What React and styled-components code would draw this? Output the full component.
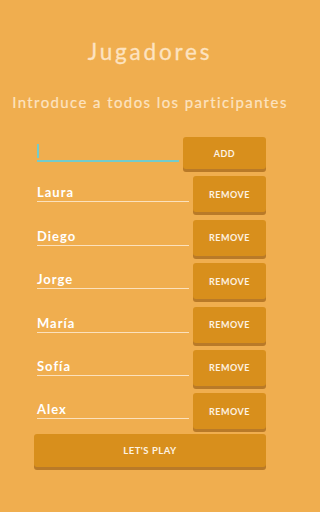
import React from "react";
import styled, { createGlobalStyle } from "styled-components";

const GlobalStyle = createGlobalStyle`
  html, body {
    margin: 0;
    padding: 0;
    background: #f0ae4f;
  }
  body {
    font-family: "Lato", "Noto Sans", sans-serif;
  }
`;

const Page = styled.div`
  width: 300px;
  height: 512px;
  overflow: hidden;
  padding-top: 39px;
  box-sizing: border-box;
  background: #f0ae4f;
`;

const Title = styled.h1`
  margin: 0;
  font-size: 22.5px;
  line-height: 26px;
  font-weight: 400;
  letter-spacing: 2.8px;
  color: #fde3c0;
  text-align: center;
  -webkit-text-stroke: 0.3px #fde3c0;
`;

const Subtitle = styled.h2`
  margin: 28px 0 0;
  font-size: 15px;
  line-height: 18px;
  font-weight: 400;
  letter-spacing: 1.4px;
  color: #fde3c0;
  text-align: center;
  white-space: nowrap;
  -webkit-text-stroke: 0.2px #fde3c0;
`;

const Form = styled.div`
  width: 232px;
  margin: 26px auto 0;
  display: flex;
  flex-direction: column;
  gap: 7.4px;
`;

const Row = styled.div`
  display: flex;
  align-items: flex-end;
  gap: 4px;
`;

const Field = styled.div`
  flex: 1;
  margin: 0 0 ${(p) => p.$lift}px 3px;
  height: 17px;
  display: flex;
  align-items: flex-end;
  border-bottom: ${(p) => (p.$active ? "2px solid #74cccb" : "1.5px solid #fbe1bd")};
`;

const Caret = styled.span`
  width: 1.5px;
  height: 14px;
  margin-bottom: 2px;
  background: #74cccb;
`;

const Name = styled.span`
  font-size: 13px;
  line-height: 16px;
  font-weight: 700;
  letter-spacing: 1px;
  color: #ffffff;
  padding-bottom: 1px;
`;

const Button = styled.button`
  flex: 0 0 auto;
  width: ${(p) => p.$width};
  height: ${(p) => p.$height}px;
  border: none;
  border-radius: 3px;
  background: #d88f1c;
  box-shadow: 0 3px 0 #b97a28;
  color: #fdf2e2;
  font-family: "Lato", "Noto Sans", sans-serif;
  font-size: ${(p) => p.$size || 9}px;
  font-weight: 700;
  letter-spacing: 0.5px;
  text-transform: uppercase;
  padding: 0;
  cursor: pointer;
`;

const PlayButton = styled(Button)`
  margin-top: -2.8px;
`;

const players = ["Laura", "Diego", "Jorge", "María", "Sofía", "Alex"];

export default function App() {
  return (
    <Page>
      <GlobalStyle />
      <Title>Jugadores</Title>
      <Subtitle>Introduce a todos los participantes</Subtitle>
      <Form>
        <Row>
          <Field $active $lift={7}>
            <Caret />
          </Field>
          <Button $width="83px" $height={32}>
            Add
          </Button>
        </Row>
        {players.map((name) => (
          <Row key={name}>
            <Field $lift={10}>
              <Name>{name}</Name>
            </Field>
            <Button $width="73px" $height={36}>
              Remove
            </Button>
          </Row>
        ))}
        <PlayButton $width="100%" $height={33} $size={9.5}>
          Let's play
        </PlayButton>
      </Form>
    </Page>
  );
}
